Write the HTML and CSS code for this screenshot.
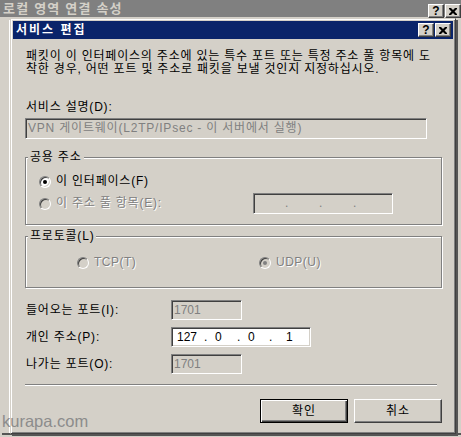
FILE: index.html
```html
<!DOCTYPE html>
<html lang="ko">

<head>
    <meta charset="UTF-8">
    <meta name="viewport" content="width=device-width, initial-scale=1.0">
    <title>서비스 편집</title>
    <link rel="stylesheet" href="styles.css">
</head>

<body>
    <!-- window behind -->
    <div class="bg-window">
        <div class="bg-title">
            <span>로컬 영역 연결 속성</span>
            <div class="caption-btns bg-btns">
                <span class="cap-btn help">?</span>
                <span class="cap-btn close">
                    <svg width="8" height="7" viewBox="0 0 8 7"><path d="M0 0h2l2 2 2-2h2v1l-2.5 2.5L8 6v1H6L4 5 2 7H0V6l2.5-2.5L0 1z" fill="#000"/></svg>
                </span>
            </div>
        </div>
        <div class="bg-page"></div>
        <div class="bg-foot"></div>
    </div>

    <!-- edit service dialog -->
    <div class="dialog">
        <div class="title-bar">
            <span>서비스 편집</span>
            <div class="caption-btns">
                <span class="cap-btn help">?</span>
                <span class="cap-btn close">
                    <svg width="8" height="7" viewBox="0 0 8 7"><path d="M0 0h2l2 2 2-2h2v1l-2.5 2.5L8 6v1H6L4 5 2 7H0V6l2.5-2.5L0 1z" fill="#000"/></svg>
                </span>
            </div>
        </div>

        <div class="dlg-body">
            <p class="desc">패킷이 이 인터페이스의 주소에 있는 특수 포트 또는 특정 주소 풀 항목에 도<br>착한 경우, 어떤 포트 및 주소로 패킷을 보낼 것인지 지정하십시오.</p>

            <div class="field-label">서비스 설명(D):</div>
            <div class="edit disabled wide">VPN 게이트웨이(L2TP/IPsec - 이 서버에서 실행)</div>

            <div class="group public">
                <span class="group-label">공용 주소</span>
                <div class="radio-row">
                    <span class="radio checked"></span>
                    <span>이 인터페이스(F)</span>
                </div>
                <div class="radio-row pool">
                    <div class="radio-item pool-item">
                        <span class="radio disabled"></span>
                        <span class="dim">이 주소 풀 항목(E):</span>
                    </div>
                    <div class="edit disabled ip-off">
                        <span></span><i>.</i><span></span><i>.</i><span></span><i>.</i><span></span>
                    </div>
                </div>
            </div>

            <div class="group proto">
                <span class="group-label">프로토콜(L)</span>
                <div class="radio-row">
                    <div class="radio-item tcp">
                        <span class="radio disabled"></span>
                        <span class="dim latin">TCP(T)</span>
                    </div>
                    <div class="radio-item">
                        <span class="radio disabled checked"></span>
                        <span class="dim latin">UDP(U)</span>
                    </div>
                </div>
            </div>

            <div class="form-row first">
                <span class="row-label">들어오는 포트(I):</span>
                <div class="edit disabled port">1701</div>
            </div>
            <div class="form-row">
                <span class="row-label">개인 주소(P):</span>
                <div class="edit ip">
                    <span>127</span><i>.</i><span>0</span><i>.</i><span>0</span><i>.</i><span>1</span>
                </div>
            </div>
            <div class="form-row">
                <span class="row-label">나가는 포트(O):</span>
                <div class="edit disabled port">1701</div>
            </div>

            <div class="separator"></div>

            <div class="buttons">
                <button class="btn default">확인</button>
                <button class="btn">취소</button>
            </div>
        </div>
    </div>

    <div class="watermark">kurapa.com</div>
</body>

</html>
```

FILE: styles.css
```css
* {
    box-sizing: border-box;
}

body {
    margin: 0;
    width: 461px;
    height: 437px;
    overflow: hidden;
    position: relative;
    background-color: #d4d0c8;
    font: 12px/13px "Liberation Sans", "Noto Sans CJK KR", sans-serif;
    letter-spacing: 0.8px;
    color: #000;
}

p {
    margin: 0;
}

/* window behind */
.bg-title {
    height: 17px;
    background-color: #808080;
    color: #d4d0c8;
    font-weight: bold;
    font-size: 13px;
    letter-spacing: 1.2px;
    display: flex;
    align-items: center;
    padding-left: 3px;
}

.bg-btns {
    align-self: flex-start;
    margin-top: 4px;
}

.bg-page {
    margin: 3px 0 0 9px;
    height: 413px;
    border-left: 1px solid #fff;
}

.bg-foot {
    margin-left: 2px;
    height: 2px;
    background-color: #555;
}

/* caption buttons */
.caption-btns {
    margin-left: auto;
    display: flex;
    gap: 1px;
}

.cap-btn {
    width: 16px;
    height: 14px;
    background-color: #d4d0c8;
    border: 1px solid;
    border-color: #fff #404040 #404040 #fff;
    box-shadow: inset -1px -1px #808080;
    display: flex;
    align-items: center;
    justify-content: center;
    color: #000;
    letter-spacing: 0;
    font: bold 12px/12px "Liberation Sans", sans-serif;
}

/* dialog */
.dialog {
    position: absolute;
    left: 10px;
    top: 18px;
    width: 446px;
    height: 416px;
    border: 1px solid;
    border-color: #d4d0c8 #404040 #404040 #d4d0c8;
    box-shadow: inset 1px 1px #fff, inset -1px -1px #808080, 2px 2px #555;
    padding: 2px;
}

.title-bar {
    height: 18px;
    background-color: #0a246a;
    color: #fff;
    font-weight: bold;
    letter-spacing: 2px;
    display: flex;
    align-items: center;
    padding: 0 2px 0 3px;
}

.dlg-body {
    padding: 0 12px;
}

.desc {
    margin: 11px 0 0 1px;
}

.field-label {
    margin: 25px 0 0 1px;
}

/* sunken edit */
.edit {
    height: 20px;
    border: 1px solid;
    border-color: #808080 #fff #fff #808080;
    box-shadow: inset 1px 1px #404040, inset -1px -1px #d4d0c8;
    background-color: #fff;
    padding: 3px 0 0 2px;
}

.edit.disabled {
    background-color: #d4d0c8;
    color: #808080;
}

.edit.wide {
    margin-top: 4px;
    width: 402px;
    height: 21px;
}

.edit.port {
    width: 71px;
    letter-spacing: 0;
}

/* ip address boxes */
.edit.ip {
    width: 140px;
    display: flex;
    padding-left: 5px;
    letter-spacing: 0;
}

.ip i,
.ip-off i {
    font-style: normal;
}

.ip span:nth-of-type(1) {
    width: 27px;
}

.ip span:nth-of-type(2) {
    width: 22px;
}

.ip span:nth-of-type(3) {
    width: 21px;
}

.ip i:nth-of-type(1),
.ip i:nth-of-type(2) {
    width: 11px;
}

.ip i:nth-of-type(3) {
    width: 17px;
}

.edit.ip-off {
    width: 140px;
    height: 21px;
    display: flex;
    padding-left: 2px;
}

.ip-off span {
    width: 28px;
}

.ip-off i {
    width: 6px;
    text-align: center;
}

/* group boxes */
.group {
    position: relative;
    width: 417px;
    border: 1px solid #808080;
    box-shadow: inset 1px 1px #fff, 1px 1px #fff;
}

.group-label {
    position: absolute;
    left: 2px;
    top: -7px;
    padding: 0 2px;
    background-color: #d4d0c8;
}

.group.public {
    margin-top: 18px;
    height: 68px;
    padding: 17px 0 0 13px;
}

.group.proto {
    margin-top: 11px;
    height: 52px;
    padding: 19px 0 0 51px;
}

.radio-row {
    display: flex;
    align-items: center;
    gap: 5px;
    height: 13px;
}

.radio-row.pool {
    margin-top: 5px;
    height: 21px;
    gap: 0;
}

.radio-item {
    display: flex;
    align-items: center;
    gap: 5px;
}

.pool-item {
    width: 214px;
}

.tcp {
    width: 177px;
}

.radio {
    width: 12px;
    height: 12px;
    border-radius: 50%;
    border: 1px solid;
    border-color: #808080 #fff #fff #808080;
    box-shadow: inset 1px 1px #404040, inset -1px -1px #d4d0c8;
    background-color: #fff;
    display: flex;
    align-items: center;
    justify-content: center;
}

.radio.disabled {
    background-color: #d4d0c8;
}

.radio.checked::after {
    content: "";
    width: 4px;
    height: 4px;
    border-radius: 50%;
    background-color: #000;
}

.radio.disabled.checked::after {
    background-color: #808080;
}

.dim {
    color: #808080;
    text-shadow: 1px 1px #fff;
}

.latin {
    letter-spacing: 0.5px;
}

/* port rows */
.form-row {
    display: flex;
    align-items: center;
    margin-top: 7px;
    padding-left: 1px;
}

.form-row.first {
    margin-top: 12px;
}

.row-label {
    width: 145px;
}

.separator {
    margin-top: 10px;
    width: 412px;
    height: 2px;
    border-top: 1px solid #808080;
    border-bottom: 1px solid #fff;
}

.buttons {
    margin-top: 13px;
    width: 417px;
    display: flex;
    justify-content: flex-end;
    gap: 6px;
}

.btn {
    width: 88px;
    height: 24px;
    padding: 0;
    font: inherit;
    letter-spacing: 1px;
    color: #000;
    background-color: #d4d0c8;
    border: 1px solid;
    border-color: #fff #404040 #404040 #fff;
    box-shadow: inset -1px -1px #808080;
}

.btn.default {
    border-color: #000;
    box-shadow: inset 1px 1px #fff, inset -1px -1px #404040, inset -2px -2px #808080;
}

.watermark {
    position: absolute;
    left: 2px;
    top: 413px;
    font: 16.5px/16px "Liberation Sans", sans-serif;
    letter-spacing: 0;
    color: #8c8c8c;
}
```
